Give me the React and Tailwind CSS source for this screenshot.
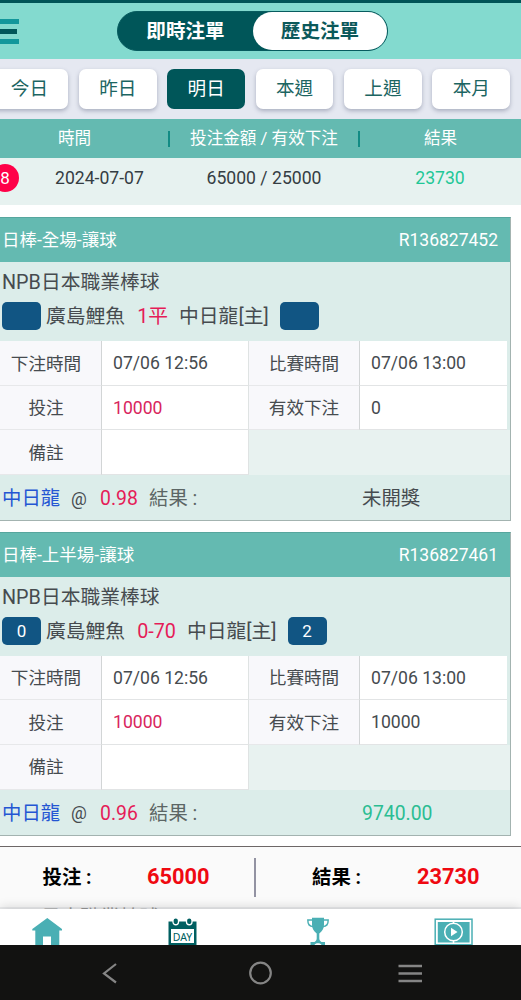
const ranges = ["今日", "昨日", "明日", "本週", "上週", "本月"];

const bets = [
  {
    id: "R136827452",
    type: "日棒-全場-讓球",
    homeScore: "",
    awayScore: "",
    line: "1平",
    valid: "0",
    odds: "0.98",
    result: "未開獎",
    won: false,
  },
  {
    id: "R136827461",
    type: "日棒-上半場-讓球",
    homeScore: "0",
    awayScore: "2",
    line: "0-70",
    valid: "10000",
    odds: "0.96",
    result: "9740.00",
    won: true,
  },
];

function Header() {
  return (
    <header className="relative flex h-[59px] justify-center border-t-[3px] border-[#005457] bg-[#83dacf] pt-2">
      <div className="absolute left-0 top-4 flex flex-col gap-[5px]">
        <span className="h-[5px] w-[19px] bg-[#12979b]" />
        <span className="h-[5px] w-[17px] bg-[#00575a]" />
        <span className="h-[5px] w-[19px] bg-[#12979b]" />
      </div>
      <div className="ml-[-16px] flex h-10 w-[271px] rounded-full border border-[#075c5f] bg-[#005659] text-[19.6px] font-bold">
        <button className="w-[135px] pt-[1px] text-white">即時注單</button>
        <button className="flex-1 rounded-full bg-white pt-[1px] text-[#0b595a]">歷史注單</button>
      </div>
    </header>
  );
}

function RangeTabs() {
  return (
    <div className="h-[60px] overflow-hidden bg-[#e5e8f1] pt-[10px]">
      <div className="-ml-[9.500px] flex w-max gap-[10.6px]">
        {ranges.map((r) => (
          <button
            key={r}
            className={`h-10 w-[77.8px] rounded-[7px] pt-[1px] text-[18.6px] ${
              r === "明日" ? "bg-[#005659] text-white" : "bg-white text-[#1c6562] shadow-[0_2px_4px_rgba(60,70,100,0.35)]"
            }`}
          >
            {r}
          </button>
        ))}
      </div>
    </div>
  );
}

function Totals() {
  return (
    <div className="overflow-hidden">
      <div className="-ml-[19px] grid h-[39px] w-[540px] grid-cols-[189px_190px_161px] items-center bg-[#64bab1] text-center text-[16.6px] text-white">
        <span className="border-r-2 border-[#128b84] leading-4">時間</span>
        <span className="border-r-2 border-[#128b84] leading-4">投注金額 / 有效下注</span>
        <span className="leading-4">結果</span>
      </div>
      <div className="-ml-[20px] grid h-[47px] w-[541px] grid-cols-[189px_190px_162px] bg-[#e7f2f0] pt-[6px] text-center text-[17.6px] leading-7 text-[#353d43]">
        <div className="flex gap-[36px] pl-[11px]">
          <span className="h-7 w-7 rounded-full bg-[#ff0048] text-[17px] leading-7 text-white">8</span>
          <span>2024-07-07</span>
        </div>
        <span>65000 / 25000</span>
        <span className="text-[#1fc797]">23730</span>
      </div>
    </div>
  );
}

function Score({ children }) {
  return (
    <span className="flex h-[28px] w-[39px] items-center justify-center rounded-[5px] bg-[#115583] text-[17px] text-white">
      {children}
    </span>
  );
}

function BetCard({ bet }) {
  return (
    <section className="mb-[10.5px] h-[304px] w-[511px] border-b border-r border-t border-[#a3b3b0] border-t-[#56a69e] bg-[#dcedea] text-[#464b4f]">
      <div className="flex h-[44px] items-center justify-between bg-[#64bab1] pl-[2px] pr-[12px] pt-[1px] text-[17.5px] text-white">
        <span>{bet.type}</span>
        <span>{bet.id}</span>
      </div>
      <div className="h-[79px] pl-[2px] pt-[7px] text-[19.8px]">
        <p className="leading-[28px]">NPB日本職業棒球</p>
        <div className="mt-[5px] flex h-[28px] items-center whitespace-nowrap leading-[28px]">
          <Score>{bet.homeScore}</Score>
          <span className="ml-[5px] pt-[2px]">廣島鯉魚</span>
          <span className="ml-3 mr-[11px] pt-[2px] text-[#e51c58]">{bet.line}</span>
          <span className="mr-[11px] pt-[2px]">中日龍[主]</span>
          <Score>{bet.awayScore}</Score>
        </div>
      </div>
      <div className="grid h-[134px] grid-cols-[101px_148px_110px_1fr] grid-rows-3 text-[17.6px]">
        <Label first>下注時間</Label>
        <Value>07/06 12:56</Value>
        <Label>比賽時間</Label>
        <Value last>07/06 13:00</Value>
        <Label first>投注</Label>
        <Value>
          <span className="text-[#d8255d]">10000</span>
        </Value>
        <Label>有效下注</Label>
        <Value last>{bet.valid}</Value>
        <Label first>備註</Label>
        <Value />
        <div className="col-span-2 bg-[#e8f2f0]" />
      </div>
      <div className="flex h-[45px] items-center pl-[2px] pt-[3px] text-[19.4px]">
        <span className="w-[69px] text-[#2456d3]">中日龍</span>
        <span className="w-[29px] text-[17.6px]">@</span>
        <span className="w-[49px] text-[#e51c58]">{bet.odds}</span>
        <span className="w-[213px] text-[#5c6665]">結果 :</span>
        <span className={bet.won ? "text-[#2bbd93]" : ""}>{bet.result}</span>
      </div>
    </section>
  );
}

function Label({ first, children }) {
  return (
    <div
      className={`flex items-center justify-center border-b border-[#e7e8ea] bg-[#f8f8fb] pt-[2px] ${first ? "pr-[9px]" : ""}`}
    >
      {children}
    </div>
  );
}

function Value({ last, children }) {
  return (
    <div
      className={`flex items-center border-b border-l border-[#e2e4e5] border-l-[#d2d5d6] bg-white pl-[11px] pt-[1px] ${
        last ? "mr-[3px]" : "border-r border-r-[#dfe3e3]"
      }`}
    >
      {children}
    </div>
  );
}

function Summary() {
  return (
    <div>
      <div className="flex h-[61px] items-center border-t border-[#6d6767] bg-[#fafafa] text-[19.4px] font-bold text-black">
        <span className="w-[105px] pl-[42.5px] pt-[2px] whitespace-nowrap">投注 :</span>
        <span className="w-[149px] pl-[42px] text-[21.8px] text-[#ef0911]">65000</span>
        <span className="h-[39px] w-[2px] bg-[#9292a2]" />
        <span className="w-[161px] pl-[56px] pt-[2px]">結果 :</span>
        <span className="text-[21.8px] text-[#ef0911]">23730</span>
      </div>
      {/* next card peeking out above the tab bar */}
      <div className="h-[2px] overflow-hidden bg-[#ebecee] pl-[2px] text-[19.8px] leading-[21px] text-[#999]">
        NPB日本職業棒球
      </div>
    </div>
  );
}

function TabBar() {
  return (
    <nav className="relative flex h-9 bg-white shadow-[0_-2px_10px_rgba(0,0,0,0.14)]">
      <svg className="ml-[32px] mt-[8px]" width="31" height="28" viewBox="0 0 31 28" fill="#4aafb4">
        <path d="M15.300 1 30 12v1.500h-2.700V28h-8.300v-8.500h-8V28H3.300V13.500H.300V12Z" />
      </svg>
      <svg className="ml-[105px] mt-[8px]" width="29" height="28" viewBox="0 0 29 28">
        <path d="M.5 4.500h28V28H.5Z" fill="#005f61" />
        <path d="M3 12h23v14H3Z" fill="#fff" />
        <rect x="5" y=".75" width="5.500" height="7" rx="2.750" fill="#005f61" stroke="#fff" strokeWidth="1.300" />
        <rect x="18.500" y=".75" width="5.500" height="7" rx="2.750" fill="#005f61" stroke="#fff" strokeWidth="1.300" />
        <text x="14.500" y="23.500" textAnchor="middle" fontSize="10.500" fontWeight="400" fontFamily="Noto Sans" fill="#005f61">
          DAY
        </text>
      </svg>
      <svg className="ml-[109px] mt-[8px]" width="24" height="28" viewBox="0 0 24 28">
        <path
          d="M6.500 3H1.800c0 4.500 1.500 6.500 5.500 6.500M17.500 3h4.700c0 4.500-1.500 6.500-5.500 6.500"
          fill="none"
          stroke="#4aafb4"
          strokeWidth="1.400"
        />
        <path
          d="M6 .8h12v7c0 4-2 6.500-4.700 8.700v5c0 1.500.8 2.500 2.200 3.500h3.500v3H4.500v-3H8.500c1.400-1 2.200-2 2.200-3.500v-5C8 14.300 6 11.800 6 7.800Z"
          fill="#4aafb4"
        />
        <path d="M8.500 28c.5-2.500 6.500-2.500 7 0Z" fill="#fff" />
      </svg>
      <svg className="ml-[104px] mt-[9px]" width="39" height="27" viewBox="0 0 39 27">
        <rect x="1.200" y="1.200" width="36.800" height="25.500" fill="#fff" stroke="#4aafb4" strokeWidth="1.500" />
        <path d="M3.800 4h31.800v20.500H3.800Z" fill="#4aafb4" />
        <path d="M19.500 2v24" stroke="#fff" strokeWidth="1.500" />
        <circle cx="19.500" cy="14" r="8.800" fill="#4aafb4" stroke="#fff" strokeWidth="1.500" />
        <path d="m17 9.800 6.500 4.200-6.500 4.200Z" fill="#fff" />
      </svg>
    </nav>
  );
}

function SystemBar() {
  return (
    <div className="relative h-[55px] bg-[#121211]">
      <svg width="521" height="55" fill="none" stroke="#858585" strokeWidth="2.2">
        <path d="M116 19 104 28.500l12 9" />
        <circle cx="260.500" cy="28" r="10.300" />
        <path d="M398.500 21h23.500M398.500 28.500h23.500M398.500 36h23.500" strokeWidth="2.500" />
      </svg>
    </div>
  );
}

export default function App() {
  return (
    <div className="flex h-[1000px] w-[521px] flex-col overflow-hidden bg-white font-[Roboto,'Noto_Sans_CJK_TC',sans-serif]">
      <Header />
      <RangeTabs />
      <Totals />
      <main className="min-h-0 flex-1 overflow-hidden pt-3">
        {bets.map((bet) => (
          <BetCard key={bet.id} bet={bet} />
        ))}
      </main>
      <Summary />
      <TabBar />
      <SystemBar />
    </div>
  );
}
